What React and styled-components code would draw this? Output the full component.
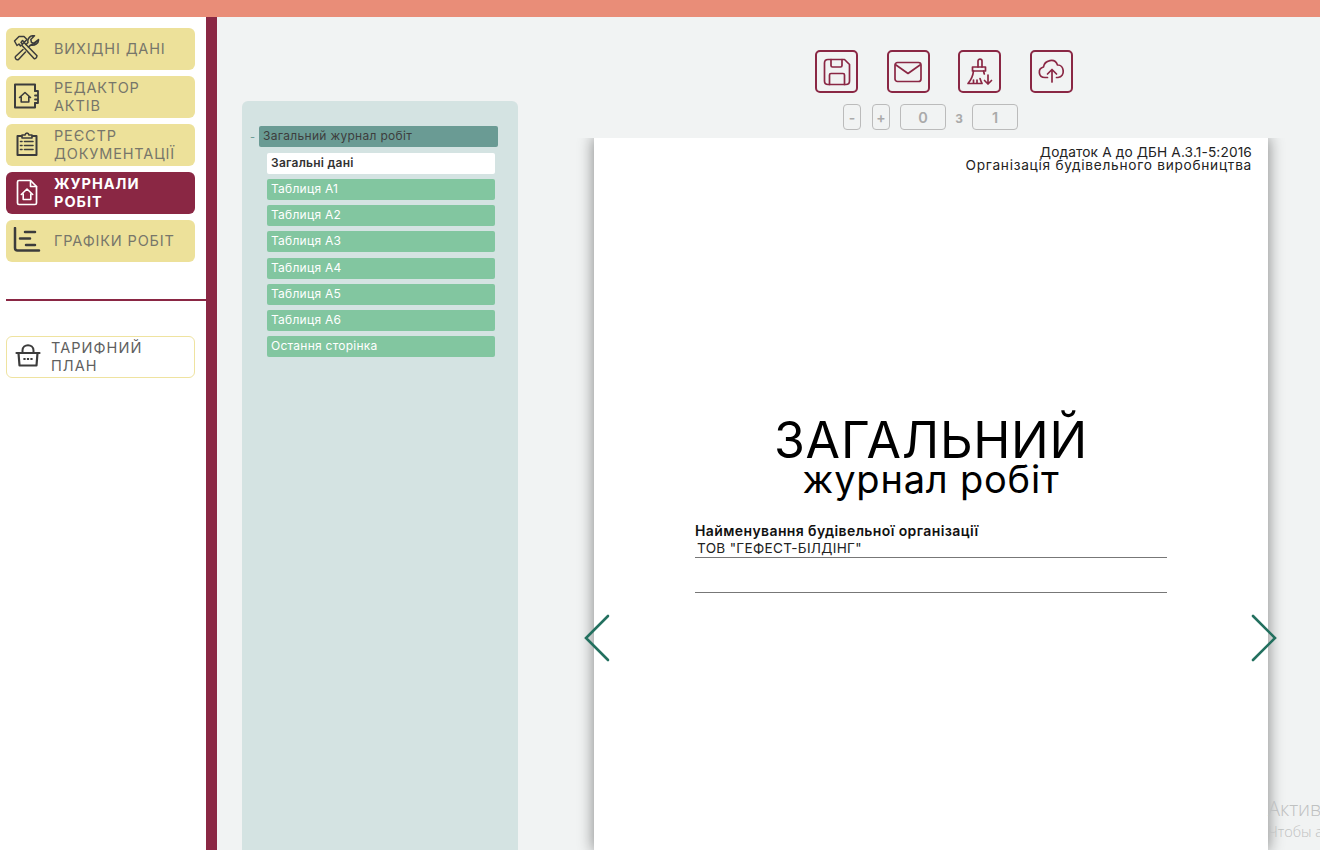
import React from "react";
import styled, { createGlobalStyle } from "styled-components";

const Global = createGlobalStyle`
  html, body { margin: 0; height: 850px; overflow: hidden; background: #fff; }
  * { box-sizing: border-box; }
  body { font-family: Inter, "Noto Sans", "Liberation Sans", sans-serif; }
`;

const TopBar = styled.div`height: 17px; background: #e98d78;`;
const Layout = styled.div`display: flex; height: 833px; position: relative; overflow: hidden;`;
const Sidebar = styled.aside`
  width: 217px; flex: none; background: #fff; border-right: 11px solid #8a2744;
  padding: 11px 0 0 6px; display: flex; flex-direction: column;
`;
const NavList = styled.nav`display: flex; flex-direction: column; gap: 6px; width: 189px;`;
const NavItem = styled.div`
  height: 42px; border-radius: 6px; display: flex; align-items: center; gap: 13px; padding-left: 7px;
  background: ${p => (p.$active ? "#8a2744" : "#ede19a")};
  color: ${p => (p.$active ? "#fff" : "#77766a")};
  font-size: 14.5px; line-height: 18px; font-weight: ${p => (p.$active ? 700 : 400)};
  letter-spacing: ${p => (p.$active ? "1px" : ".85px")};
  svg { flex: none; }
`;
const Divider = styled.hr`height: 2px; margin: 37px 0 0; border: 0; background: #8a2744;`;
const PlanItem = styled.div`
  margin-top: 35px; width: 189px; height: 42px; border: 1px solid #efe3a0; border-radius: 6px;
  display: flex; align-items: center; gap: 10px; padding-left: 8px; color: #5f5f5f;
  font-size: 14.5px; line-height: 18px; letter-spacing: 1.05px;
  svg { flex: none; }
`;

const Main = styled.main`flex: 1; background: #f1f3f3; display: flex; padding-left: 25px; min-width: 0;`;
const TreePanel = styled.section`
  width: 276px; margin-top: 84px; background: #d4e3e2; border-radius: 6px 6px 0 0;
  padding: 25px 20px 0 8px; flex: none;
`;
const TreeRoot = styled.div`display: flex; align-items: center; font-size: 12px; color: #555;`;
const Toggle = styled.span`width: 9px; color: #6a9a94; font-size: 11px;`;
const RootLabel = styled.div`
  flex: 1; height: 21px; line-height: 20px; padding-left: 4px; background: #6a9b94; border-radius: 2px;
  color: #3d3d3d; letter-spacing: .3px;
`;
const TreeChildren = styled.div`
  margin: 5.5px 3px 0 17px; display: flex; flex-direction: column; gap: 5.25px;
`;
const TreeChild = styled.div`
  height: 21px; line-height: 20px; padding-left: 4px; border-radius: 2px; font-size: 12px; letter-spacing: .25px;
  background: ${p => (p.$active ? "#fff" : "#82c6a0")};
  color: ${p => (p.$active ? "#333" : "#fff")};
  font-weight: ${p => (p.$active ? 600 : 400)};
`;

const Viewer = styled.section`margin-left: 76px; width: 674px; flex: none; display: flex; flex-direction: column;`;
const Toolbar = styled.div`display: flex; gap: 28.7px; margin: 33px 0 0 221px;`;
const ToolButton = styled.button`
  width: 43px; height: 43px; padding: 0; background: transparent; border: 2px solid #8a2744; border-radius: 5px;
  display: flex; align-items: center; justify-content: center;
`;
const Pager = styled.div`display: flex; align-items: center; margin: 11px 0 0 249px; height: 26px; color: #aaa; font-weight: 600;`;
const PagerStep = styled.div`
  width: 18px; height: 26px; border: 1px solid #bbb; border-radius: 4px; margin-right: ${p => p.$mr}px;
  display: flex; align-items: center; justify-content: center; font-size: 14px; color: #aaa;
`;
const PagerField = styled.div`
  width: 46px; height: 26px; border: 1px solid #bbb; border-radius: 4px;
  display: flex; align-items: center; justify-content: center; font-size: 14.5px;
`;
const PagerOf = styled.span`width: 26px; text-align: center; font-size: 15px;`;

const Page = styled.article`
  margin-top: 8px; flex: 1; background: #fff; box-shadow: 0 0 14px 1px rgba(0,0,0,.42);
  clip-path: inset(0 -30px 0 -30px);
  padding: 8px 16px 0 101px; color: #111; position: relative;
`;
const Source = styled.div`text-align: right; font-size: 13.7px; line-height: 13px; color: #222;`;
const SourceLine = styled.div`letter-spacing: ${p => p.$spacing}px;`;
const Title = styled.h1`
  margin: 243px 0 0 -101px; text-align: center; font-weight: 400;
  font-size: 50px; line-height: 50px; letter-spacing: .8px; color: #000; width: 674px;
`;
const Subtitle = styled.h2`
  margin: -6px 0 0 -101px; text-align: center; font-weight: 400; font-size: 38px; line-height: 41px;
  letter-spacing: .8px; color: #000; width: 674px;
`;
const FieldLabel = styled.div`margin-top: 22px; font-size: 14px; line-height: 18px; font-weight: 600; letter-spacing: .39px; width: 472px;`;
const FieldValue = styled.div`
  width: 472px; height: 18px; padding-left: 2px; font-size: 13.6px; line-height: 17px; letter-spacing: .3px;
  border-bottom: 1px solid #777; color: #222;
`;
const EmptyLine = styled.div`width: 472px; height: 35px; border-bottom: 1px solid #777;`;

const Arrow = styled.svg`
  position: absolute; top: 476px; ${p => (p.$side === "left" ? "left: -10px;" : "right: -9px;")}
`;
const Watermark = styled.div`
  position: absolute; left: 1268px; top: 780px; white-space: nowrap; color: #bfc1c1; font-family: "Open Sans", sans-serif;
`;
const WmTitle = styled.div`font-size: 20px; line-height: 24px; font-weight: 300;`;
const WmText = styled.div`font-size: 14.5px; line-height: 22px; font-weight: 300;`;

const Ic = ({ size = 28, box = 28, color = "#3c3c3c", sw = 1.6, children }) => (
  <svg width={size} height={size} viewBox={`0 0 ${box} ${box}`} fill="none" stroke={color} strokeWidth={sw} strokeLinecap="round" strokeLinejoin="round">{children}</svg>
);
const Tools = () => (
  <Ic sw={1.5}>
    <path d="M1.500 6 6 1.500h5L14 4.500 11.500 7 9.500 5.500 8 7.500 9.500 9 7.500 11 6 9 4 10.500z" />
    <path d="M9.500 9 11.500 7M9 10.500 21 23.500c1 1 2.800-.8 3-2.800L11.500 8" />
    <path d="M25.500 4.500 21.500 8.500 18.500 7.500 17.800 4.500 21.500.8C17.500 0 14 3.500 15 7.500L13 9.500M15.500 12 17.500 10C21.500 11 26 8.500 25.500 4.500z" />
    <path d="M10 14.500 2.500 21.500C1.500 23 3.500 25.500 5.500 24.500L12.500 17" />
  </Ic>
);
const Book = () => (
  <Ic>
    <path d="M22 8V1.500H2V24.500H22V20" strokeWidth="2"/>
    <path d="M22 8h3v4.500M22 12.500h3v4H22M22 16.500h3v3.500H22" strokeWidth="1.800"/>
    <path d="M6.500 14.500 12 9.500 17.500 14.500M8.200 14v5h7.600v-5"/>
  </Ic>
);
const Clip = () => (
  <Ic>
    <path d="M8.500 5H4.500v19h19V5h-4" strokeWidth="2"/>
    <path d="M9 7V4h3C12.500 1.500 15.500 1.500 16 4h3v3z"/>
    <path d="M7.500 10.500h1.500M11.500 10.500h8.500M7.500 14.500h1.500M11.500 14.500h8.500M7.500 18.500h1.500M11.500 18.500h8.500"/>
  </Ic>
);
const Doc = () => (
  <Ic color="#fff">
    <path d="M6 1.500h11.500l6 6V24a1.500 1.500 0 0 1-1.500 1.500H6A1.500 1.500 0 0 1 4.500 24V3A1.500 1.500 0 0 1 6 1.500z" strokeWidth="1.700"/>
    <path d="M17.500 1.500v6h6"/>
    <path d="M8.300 15.500 14 10l5.700 5.500M10.200 15v5.500h7.600V15"/>
  </Ic>
);
const Chart = () => (
  <Ic color="#3c3c3c">
    <path d="M2 1V21c0 1.600 1 2.500 2.500 2.500H26" strokeWidth="2.500"/>
    <path d="M12 5h10M7 11.500h10M13 18h9" strokeWidth="2.500"/>
  </Ic>
);
const Basket = () => (
  <Ic size={26} box={26}>
    <path d="M1.500 9h23" strokeWidth="2.200"/>
    <path d="M3.500 9 4.500 21.500h17L22.500 9" strokeWidth="2.200"/>
    <path d="M7.500 9V6.500C7.500-.5 18.500-.5 18.500 6.500V9" strokeWidth="2"/>
    <path d="M9.500 14v2M13 14v2M16.500 14v2" strokeWidth="2.200" strokeLinecap="butt"/>
  </Ic>
);
const R = "#8a2744";
const TB = ({ children }) => (
  <svg width="30" height="30" viewBox="0 0 30 30" fill="none" stroke={R} strokeWidth="1.700" strokeLinecap="round" strokeLinejoin="round">{children}</svg>
);

const items = ["Таблиця А1","Таблиця А2","Таблиця А3","Таблиця А4","Таблиця А5","Таблиця А6","Остання сторінка"];

export default function App() {
  return (
    <>
      <Global />
      <TopBar />
      <Layout>
        <Sidebar>
          <NavList>
            <NavItem><Tools /><span>ВИХІДНІ ДАНІ</span></NavItem>
            <NavItem><Book /><span>РЕДАКТОР<br />АКТІВ</span></NavItem>
            <NavItem><Clip /><span>РЕЄСТР<br />ДОКУМЕНТАЦІЇ</span></NavItem>
            <NavItem $active><Doc /><span>ЖУРНАЛИ<br />РОБІТ</span></NavItem>
            <NavItem><Chart /><span>ГРАФІКИ РОБІТ</span></NavItem>
          </NavList>
          <Divider />
          <PlanItem><Basket /><span>ТАРИФНИЙ<br />ПЛАН</span></PlanItem>
        </Sidebar>
        <Main>
          <TreePanel>
            <TreeRoot><Toggle>-</Toggle><RootLabel>Загальний журнал робіт</RootLabel></TreeRoot>
            <TreeChildren>
              <TreeChild $active>Загальні дані</TreeChild>
              {items.map(t => <TreeChild key={t}>{t}</TreeChild>)}
            </TreeChildren>
          </TreePanel>
          <Viewer>
            <Toolbar>
              <ToolButton><TB><path d="M2.500 6C2.500 4 4 2.500 6 2.500h16.500L27.500 7.500V24c0 2-1.500 3.500-3.500 3.500H6c-2 0-3.500-1.500-3.500-3.500z"/><path d="M9 2.500V8.500c0 1 .5 1.500 1.500 1.500h8c1 0 1.500-.5 1.500-1.500V2.500"/><path d="M7.500 27.500V18c0-1 .5-1.500 1.500-1.500h12c1 0 1.500.5 1.500 1.500v9.500"/></TB></ToolButton>
              <ToolButton><TB><rect x="2" y="5.500" width="26" height="19" rx="2.500"/><path d="M3 8l12 8.500L27 8"/></TB></ToolButton>
              <ToolButton><TB><path d="M13 10V4c0-2.500 4-2.500 4 0V10"/><path d="M7.500 14V10h13v4z"/><path d="M8.500 14C8 18.500 6.500 22.500 3 26.500h14c-1-2-1.500-3.500-2-5"/><path d="M18.500 14c.3 1 .5 2 .8 3"/><path d="M8.500 26v-3M12 26v-3"/><path d="M23 18v9M19.500 23.500 23 27l3.500-3.500"/></TB></ToolButton>
              <ToolButton><TB><path d="M10.500 20.500H8c-7 0-7.500-9-1.500-10.500C7.500 3 18 .5 20.500 8c6.500-.5 8.500 11.500.5 12.500H19.500"/><path d="M15 25V12.500M10.500 17 15 12.500 19.500 17"/></TB></ToolButton>
            </Toolbar>
            <Pager>
              <PagerStep $mr={11}>-</PagerStep>
              <PagerStep $mr={10}>+</PagerStep>
              <PagerField>0</PagerField>
              <PagerOf>з</PagerOf>
              <PagerField>1</PagerField>
            </Pager>
            <Page>
              <Arrow $side="left" width="26" height="48" viewBox="0 0 26 48" fill="none" stroke="#23705f" strokeWidth="2.600" strokeLinecap="round"><path d="M24 2 2 24l22 22" /></Arrow>
              <Arrow $side="right" width="26" height="48" viewBox="0 0 26 48" fill="none" stroke="#23705f" strokeWidth="2.600" strokeLinecap="round"><path d="M2 2l22 22L2 46" /></Arrow>
              <Source>
                <SourceLine $spacing={0.13}>Додаток А до ДБН А.3.1-5:2016</SourceLine>
                <SourceLine $spacing={0.72}>Організація будівельного виробництва</SourceLine>
              </Source>
              <Title>ЗАГАЛЬНИЙ</Title>
              <Subtitle>журнал робіт</Subtitle>
              <FieldLabel>Найменування будівельної організації</FieldLabel>
              <FieldValue>ТОВ "ГЕФЕСТ-БІЛДІНГ"</FieldValue>
              <EmptyLine />
            </Page>
          </Viewer>
        </Main>
        <Watermark>
          <WmTitle>Активация Windows</WmTitle>
          <WmText>Чтобы активировать Windows</WmText>
        </Watermark>
      </Layout>
    </>
  );
}
